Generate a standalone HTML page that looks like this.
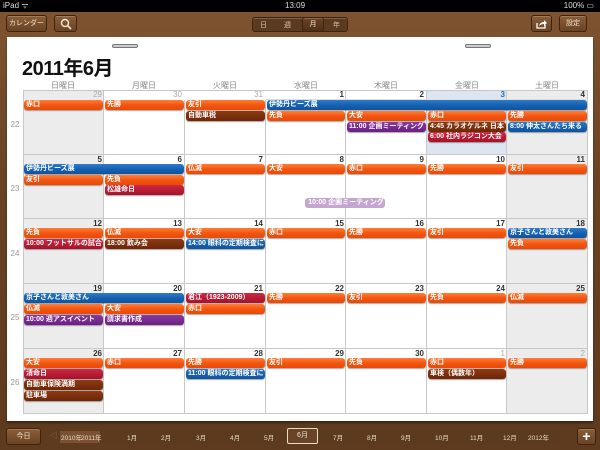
<!DOCTYPE html>
<html><head><meta charset="utf-8">
<style>
*{margin:0;padding:0;box-sizing:border-box}
body{width:600px;height:450px;overflow:hidden;position:relative;background:#6b4426;font-family:"Liberation Sans","Noto Sans CJK JP",sans-serif}
.abs{position:absolute}
#status{left:0;top:0;width:600px;height:12px;background:#000;color:#ddd;font-size:8px;line-height:12px}
#wood{left:0;top:12px;width:600px;height:438px;background:linear-gradient(#7e5330,#6a4224 40%,#5e3a1e)}
.btn{position:absolute;border:1px solid #3e230f;border-radius:3px;background:linear-gradient(#8a5d38,#6b4424);color:#f3e6d6;font-size:7px;text-align:center;box-shadow:inset 0 1px 0 rgba(255,255,255,.2)}
#page{left:7px;top:37px;width:586px;height:384px;background:#fff;box-shadow:0 2px 2px rgba(0,0,0,.4)}
.ring{position:absolute;height:4px;width:26px;border:1px solid #777;border-radius:2px;background:#ccc}
.c{position:absolute;border-right:1px solid #c8c8c8;border-bottom:1px solid #c8c8c8}
.g{background:#ececec}
.t{background:#dde6f0}
.d{position:absolute;font-size:8px;font-weight:bold;color:#333;text-align:right;width:78px}
.e{position:absolute;height:10px;border-radius:3px;color:#fff;font-size:7px;font-weight:bold;line-height:10px;padding-left:2px;white-space:nowrap;overflow:hidden;box-shadow:0 1px 1px rgba(0,0,0,.35)}
.o{background:linear-gradient(#ff7d36,#f35610 50%,#e94a06)}
.b{background:linear-gradient(#2e7ccc,#1761b0 50%,#0f52a0)}
.p{background:linear-gradient(#8a3aa0,#6a1f82)}
.r{background:linear-gradient(#8e3a12,#6e2608)}
.k{background:linear-gradient(#cc2a44,#a81028)}
.wk{position:absolute;left:8px;width:14px;text-align:center;font-size:8px;color:#999}
.dn{position:absolute;top:80px;width:80px;text-align:center;font-size:8px;color:#888}
</style></head><body>
<div id="status" class="abs"><span style="position:absolute;left:3px">iPad ᯤ</span><span style="position:absolute;left:285px">13:09</span><span style="position:absolute;right:6px">100% ▭</span></div>
<div id="wood" class="abs"></div>
<div class="btn" style="left:6px;top:15px;width:41px;height:17px;line-height:15px">カレンダー</div>
<div class="btn" style="left:54px;top:15px;width:23px;height:17px"><svg width="12" height="12" viewBox="0 0 12 12" style="margin-top:2px"><circle cx="5" cy="5" r="3.5" stroke="#f3e6d6" stroke-width="1.4" fill="none"/><path d="M7.5 7.5L11 11" stroke="#f3e6d6" stroke-width="1.6"/></svg></div>
<div class="btn" style="left:252px;top:17px;width:96px;height:15px;background:#5a3a20"></div>
<div class="abs" style="left:260px;top:20px;font-size:7px;color:#d8c4aa">日</div>
<div class="abs" style="left:284px;top:20px;font-size:7px;color:#d8c4aa">週</div>
<div class="btn" style="left:302px;top:17px;width:22px;height:15px;line-height:13px;background:linear-gradient(#6a4425,#4e2f16)">月</div>
<div class="abs" style="left:333px;top:20px;font-size:7px;color:#d8c4aa">年</div>
<div class="btn" style="left:531px;top:15px;width:21px;height:17px"><svg width="11" height="10" viewBox="0 0 11 10" style="margin-top:3px"><path d="M1 4V9H9V6" stroke="#fff" stroke-width="1.3" fill="none"/><path d="M3 7Q4 3 8 3V1L11 4L8 7V5Q5 5 3 7Z" fill="#fff"/></svg></div>
<div class="btn" style="left:559px;top:15px;width:28px;height:17px;line-height:15px">設定</div>

<div id="page" class="abs"></div>
<div class="ring" style="left:112px;top:44px"></div>
<div class="ring" style="left:465px;top:44px"></div>
<div class="abs" style="left:22px;top:52px;font-size:20px;font-weight:bold;color:#111;letter-spacing:-0.5px">2011年6月</div>
<div class="dn" style="left:23px">日曜日</div><div class="dn" style="left:104px">月曜日</div><div class="dn" style="left:185px">火曜日</div><div class="dn" style="left:266px">水曜日</div><div class="dn" style="left:346px">木曜日</div><div class="dn" style="left:427px">金曜日</div><div class="dn" style="left:507px">土曜日</div>

<div class="abs" style="left:23px;top:90px;width:565px;height:324px;border-left:1px solid #c8c8c8;border-top:1px solid #c8c8c8"></div>
<div class="c g" style="left:24px;top:91px;width:80px;height:64px"></div>
<div class="c" style="left:104px;top:91px;width:81px;height:64px"></div>
<div class="c" style="left:185px;top:91px;width:81px;height:64px"></div>
<div class="c" style="left:266px;top:91px;width:80px;height:64px"></div>
<div class="c" style="left:346px;top:91px;width:81px;height:64px"></div>
<div class="c t" style="left:427px;top:91px;width:80px;height:64px"></div>
<div class="c g" style="left:507px;top:91px;width:81px;height:64px"></div>

<div class="c g" style="left:24px;top:155px;width:80px;height:64px"></div>
<div class="c" style="left:104px;top:155px;width:81px;height:64px"></div>
<div class="c" style="left:185px;top:155px;width:81px;height:64px"></div>
<div class="c" style="left:266px;top:155px;width:80px;height:64px"></div>
<div class="c" style="left:346px;top:155px;width:81px;height:64px"></div>
<div class="c" style="left:427px;top:155px;width:80px;height:64px"></div>
<div class="c g" style="left:507px;top:155px;width:81px;height:64px"></div>

<div class="c g" style="left:24px;top:219px;width:80px;height:65px"></div>
<div class="c" style="left:104px;top:219px;width:81px;height:65px"></div>
<div class="c" style="left:185px;top:219px;width:81px;height:65px"></div>
<div class="c" style="left:266px;top:219px;width:80px;height:65px"></div>
<div class="c" style="left:346px;top:219px;width:81px;height:65px"></div>
<div class="c" style="left:427px;top:219px;width:80px;height:65px"></div>
<div class="c g" style="left:507px;top:219px;width:81px;height:65px"></div>

<div class="c g" style="left:24px;top:284px;width:80px;height:65px"></div>
<div class="c" style="left:104px;top:284px;width:81px;height:65px"></div>
<div class="c" style="left:185px;top:284px;width:81px;height:65px"></div>
<div class="c" style="left:266px;top:284px;width:80px;height:65px"></div>
<div class="c" style="left:346px;top:284px;width:81px;height:65px"></div>
<div class="c" style="left:427px;top:284px;width:80px;height:65px"></div>
<div class="c g" style="left:507px;top:284px;width:81px;height:65px"></div>

<div class="c g" style="left:24px;top:349px;width:80px;height:65px"></div>
<div class="c" style="left:104px;top:349px;width:81px;height:65px"></div>
<div class="c" style="left:185px;top:349px;width:81px;height:65px"></div>
<div class="c" style="left:266px;top:349px;width:80px;height:65px"></div>
<div class="c" style="left:346px;top:349px;width:81px;height:65px"></div>
<div class="c" style="left:427px;top:349px;width:80px;height:65px"></div>
<div class="c g" style="left:507px;top:349px;width:81px;height:65px"></div>

<div class="abs" style="left:104px;top:91px;width:81px;height:9px;background:#fff"></div>
<div class="abs" style="left:185px;top:91px;width:81px;height:9px;background:#fff"></div>
<div class="abs" style="left:266px;top:91px;width:322px;height:9px;border-bottom:1px solid #ddd"></div>

<div class="d" style="left:24px;top:90px;color:#aaa;font-weight:normal">29</div>
<div class="d" style="left:104px;top:90px;color:#aaa;font-weight:normal">30</div>
<div class="d" style="left:185px;top:90px;color:#aaa;font-weight:normal">31</div>
<div class="d" style="left:266px;top:90px">1</div>
<div class="d" style="left:346px;top:90px">2</div>
<div class="d" style="left:427px;top:90px;color:#2a6ac0">3</div>
<div class="d" style="left:507px;top:90px">4</div>
<div class="d" style="left:24px;top:155px">5</div><div class="d" style="left:104px;top:155px">6</div><div class="d" style="left:185px;top:155px">7</div><div class="d" style="left:266px;top:155px">8</div><div class="d" style="left:346px;top:155px">9</div><div class="d" style="left:427px;top:155px">10</div><div class="d" style="left:507px;top:155px">11</div>
<div class="d" style="left:24px;top:219px">12</div><div class="d" style="left:104px;top:219px">13</div><div class="d" style="left:185px;top:219px">14</div><div class="d" style="left:266px;top:219px">15</div><div class="d" style="left:346px;top:219px">16</div><div class="d" style="left:427px;top:219px">17</div><div class="d" style="left:507px;top:219px">18</div>
<div class="d" style="left:24px;top:284px">19</div><div class="d" style="left:104px;top:284px">20</div><div class="d" style="left:185px;top:284px">21</div><div class="d" style="left:266px;top:284px">22</div><div class="d" style="left:346px;top:284px">23</div><div class="d" style="left:427px;top:284px">24</div><div class="d" style="left:507px;top:284px">25</div>
<div class="d" style="left:24px;top:349px">26</div><div class="d" style="left:104px;top:349px">27</div><div class="d" style="left:185px;top:349px">28</div><div class="d" style="left:266px;top:349px">29</div><div class="d" style="left:346px;top:349px">30</div><div class="d" style="left:427px;top:349px;color:#aaa;font-weight:normal">1</div><div class="d" style="left:507px;top:349px;color:#aaa;font-weight:normal">2</div>

<div class="wk" style="top:120px">22</div><div class="wk" style="top:184px">23</div><div class="wk" style="top:249px">24</div><div class="wk" style="top:313px">25</div><div class="wk" style="top:378px">26</div>

<div class="e o" style="left:24px;top:100px;width:79px">赤口</div>
<div class="e o" style="left:105px;top:100px;width:79px">先勝</div>
<div class="e o" style="left:186px;top:100px;width:79px">友引</div>
<div class="e b" style="left:267px;top:100px;width:320px">伊勢丹ビーズ展</div>
<div class="e r" style="left:186px;top:111px;width:79px">自動車税</div>
<div class="e o" style="left:267px;top:111px;width:78px">先負</div>
<div class="e o" style="left:347px;top:111px;width:79px">大安</div>
<div class="e o" style="left:428px;top:111px;width:78px">赤口</div>
<div class="e o" style="left:508px;top:111px;width:79px">先勝</div>
<div class="e p" style="left:347px;top:122px;width:79px">11:00 企画ミーティング</div>
<div class="e r" style="left:428px;top:122px;width:78px">4:45 カラオケルネ 日本</div>
<div class="e b" style="left:508px;top:122px;width:79px">8:00 伸太さんたち来る</div>
<div class="e k" style="left:428px;top:132px;width:78px">6:00 社内ラジコン大会</div>

<div class="e b" style="left:24px;top:164px;width:160px">伊勢丹ビーズ展</div>
<div class="e o" style="left:186px;top:164px;width:79px">仏滅</div>
<div class="e o" style="left:267px;top:164px;width:78px">大安</div>
<div class="e o" style="left:347px;top:164px;width:79px">赤口</div>
<div class="e o" style="left:428px;top:164px;width:78px">先勝</div>
<div class="e o" style="left:508px;top:164px;width:79px">友引</div>
<div class="e o" style="left:24px;top:175px;width:79px">友引</div>
<div class="e o" style="left:105px;top:175px;width:79px">先負</div>
<div class="e k" style="left:105px;top:185px;width:79px">松雄命日</div>
<div class="e" style="left:305px;top:198px;width:80px;background:#c4a6d0;text-align:center;box-shadow:none">10:00 企画ミーティング</div>

<div class="e o" style="left:24px;top:228px;width:79px">先負</div>
<div class="e o" style="left:105px;top:228px;width:79px">仏滅</div>
<div class="e o" style="left:186px;top:228px;width:79px">大安</div>
<div class="e o" style="left:267px;top:228px;width:78px">赤口</div>
<div class="e o" style="left:347px;top:228px;width:79px">先勝</div>
<div class="e o" style="left:428px;top:228px;width:78px">友引</div>
<div class="e b" style="left:508px;top:228px;width:79px">京子さんと敦美さん</div>
<div class="e k" style="left:24px;top:239px;width:79px">10:00 フットサルの試合</div>
<div class="e r" style="left:105px;top:239px;width:79px">18:00 飲み会</div>
<div class="e b" style="left:186px;top:239px;width:79px">14:00 眼科の定期検査に</div>
<div class="e o" style="left:508px;top:239px;width:79px">先負</div>

<div class="e b" style="left:24px;top:293px;width:160px">京子さんと敦美さん</div>
<div class="e k" style="left:186px;top:293px;width:79px">君江（1923-2009）</div>
<div class="e o" style="left:267px;top:293px;width:78px">先勝</div>
<div class="e o" style="left:347px;top:293px;width:79px">友引</div>
<div class="e o" style="left:428px;top:293px;width:78px">先負</div>
<div class="e o" style="left:508px;top:293px;width:79px">仏滅</div>
<div class="e o" style="left:24px;top:304px;width:79px">仏滅</div>
<div class="e o" style="left:105px;top:304px;width:79px">大安</div>
<div class="e o" style="left:186px;top:304px;width:79px">赤口</div>
<div class="e p" style="left:24px;top:315px;width:79px">10:00 週アスイベント</div>
<div class="e p" style="left:105px;top:315px;width:79px">請求書作成</div>

<div class="e o" style="left:24px;top:358px;width:79px">大安</div>
<div class="e o" style="left:105px;top:358px;width:79px">赤口</div>
<div class="e o" style="left:186px;top:358px;width:79px">先勝</div>
<div class="e o" style="left:267px;top:358px;width:78px">友引</div>
<div class="e o" style="left:347px;top:358px;width:79px">先負</div>
<div class="e o" style="left:428px;top:358px;width:78px">赤口</div>
<div class="e o" style="left:508px;top:358px;width:79px">先勝</div>
<div class="e k" style="left:24px;top:369px;width:79px">清命日</div>
<div class="e b" style="left:186px;top:369px;width:79px">11:00 眼科の定期検査に</div>
<div class="e r" style="left:428px;top:369px;width:78px">車検（偶数年）</div>
<div class="e r" style="left:24px;top:380px;width:79px">自動車保険満期</div>
<div class="e r" style="left:24px;top:391px;width:79px">駐車場</div>

<div class="btn" style="left:6px;top:428px;width:35px;height:17px;line-height:15px">今日</div>
<div class="abs" style="left:50px;top:430px;font-size:8px;color:#8a6a4a">◁</div>
<div class="abs" style="left:59px;top:431px;width:500px;height:12px;background:#5c3a1e;border-radius:2px"></div>
<div class="abs" style="left:60px;top:431px;width:40px;height:12px;background:#7a5232"></div>
<div class="abs" style="top:432px;left:0;width:600px;font-size:6.5px;color:#e8d8c4">
<span style="position:absolute;left:61px">2010年</span><span style="position:absolute;left:81px">2011年</span>
<span style="position:absolute;left:127px">1月</span><span style="position:absolute;left:161px">2月</span><span style="position:absolute;left:196px">3月</span><span style="position:absolute;left:230px">4月</span><span style="position:absolute;left:264px">5月</span><span style="position:absolute;left:333px">7月</span><span style="position:absolute;left:367px">8月</span><span style="position:absolute;left:401px">9月</span><span style="position:absolute;left:435px">10月</span><span style="position:absolute;left:470px">11月</span><span style="position:absolute;left:503px">12月</span><span style="position:absolute;left:528px">2012年</span></div>
<div class="abs" style="left:287px;top:428px;width:31px;height:16px;border:1px solid #eadbc4;border-radius:2px;background:#6a4426;color:#f3e6d6;font-size:7px;text-align:center;line-height:14px">6月</div>
<div class="btn" style="left:577px;top:428px;width:19px;height:17px;font-size:14px;font-weight:bold;line-height:15px;color:#fff">+</div>
</body></html>
